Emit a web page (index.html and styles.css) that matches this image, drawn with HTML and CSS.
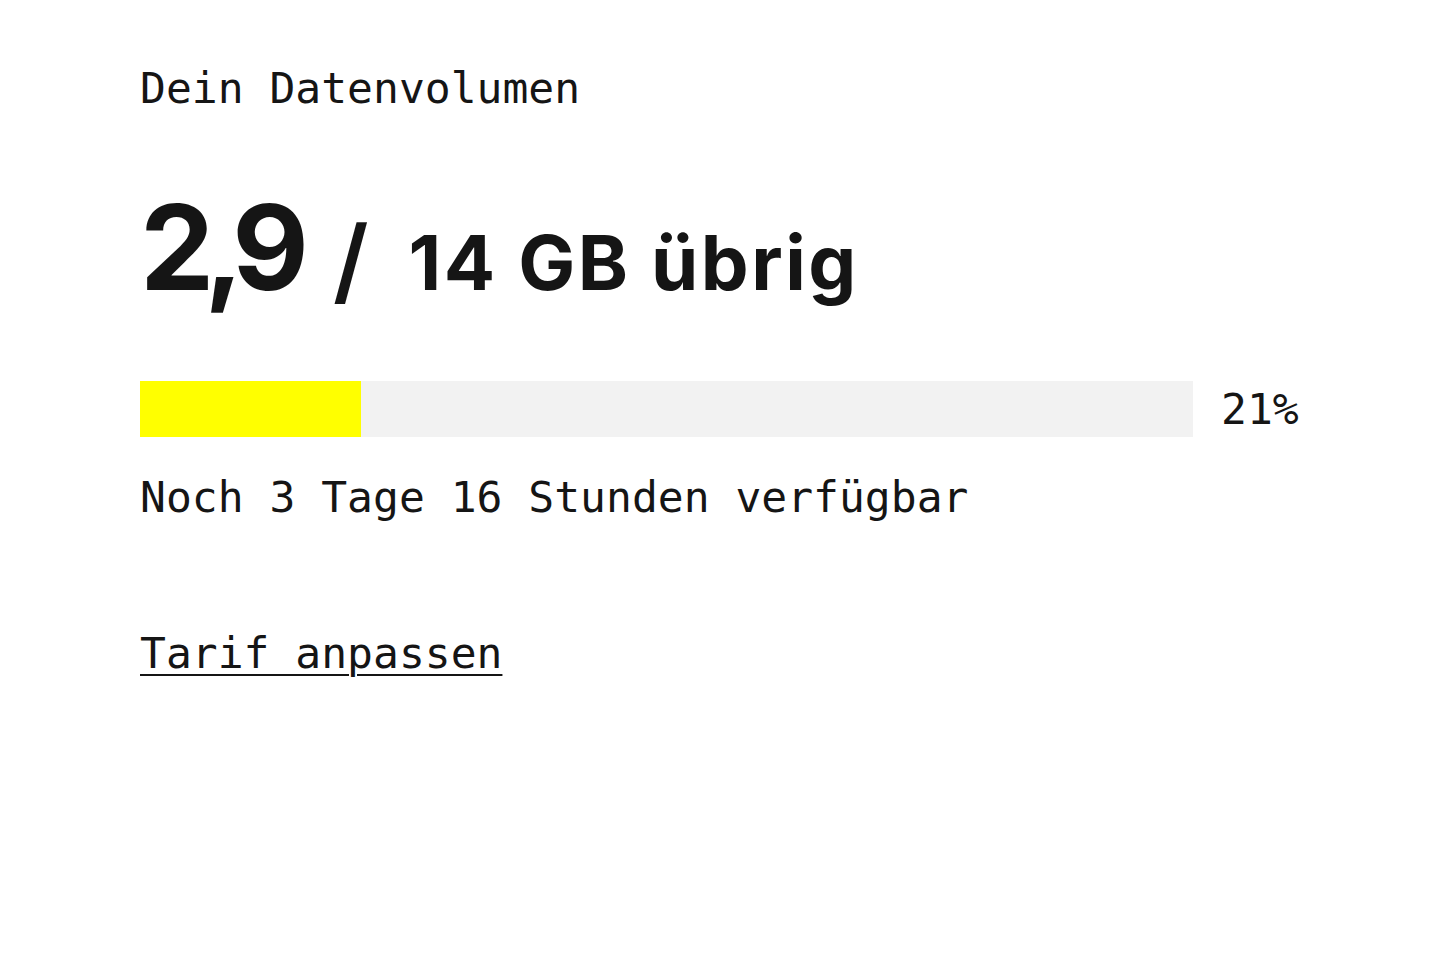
FILE: index.html
```html
<!DOCTYPE html>
<html lang="de">
<head>
<meta charset="utf-8">
<title>Dein Datenvolumen</title>
<link rel="stylesheet" href="styles.css">
</head>
<body>
<main class="card">
  <h2 class="label">Dein Datenvolumen</h2>
  <p class="amount"><span class="amount-left">2,9</span><span class="slash">/</span><span class="amount-total">14 GB übrig</span></p>
  <div class="usage">
    <div class="track"><div class="fill" style="width:21%"></div></div>
    <span class="percent">21%</span>
  </div>
  <p class="remaining">Noch 3 Tage 16 Stunden verfügbar</p>
  <a class="link" href="#">Tarif anpassen</a>
</main>
</body>
</html>
```
FILE: styles.css
```css
html, body {
  margin: 0;
  padding: 0;
  background: #fff;
  color: #151515;
}
.card {
  padding: 60px 140px 0 140px;
  display: flex;
  flex-direction: column;
  align-items: flex-start;
  font-family: "DejaVu Sans Mono", "Liberation Mono", monospace;
  font-size: 43px;
}
.label {
  margin: 0;
  font-weight: 400;
  font-size: 43px;
  line-height: 56px;
}
.amount {
  margin: 72px 0 0 0;
  font-family: "Inter", "Lato", sans-serif;
  font-weight: 700;
  line-height: 1;
  display: flex;
  align-items: baseline;
}
.amount-left {
  font-size: 118px;
  letter-spacing: -10px;
}
.slash {
  font-size: 94px;
  font-weight: 600;
  margin: 0 40px 0 34px;
  transform: translateY(4px);
}
.amount-total {
  font-size: 76px;
  letter-spacing: 2.5px;
}
.usage {
  margin-top: 75px;
  display: flex;
  align-items: center;
  gap: 28px;
}
.track {
  width: 1053px;
  height: 56px;
  background: #f2f2f2;
}
.fill {
  height: 100%;
  background: #ffff00;
}
.percent {
  line-height: 56px;
}
.remaining {
  margin: 32px 0 0 0;
  line-height: 56px;
}
.link {
  margin-top: 100px;
  color: #151515;
  line-height: 56px;
  text-decoration: underline;
  text-decoration-thickness: 2px;
  text-underline-offset: 6px;
}
```
